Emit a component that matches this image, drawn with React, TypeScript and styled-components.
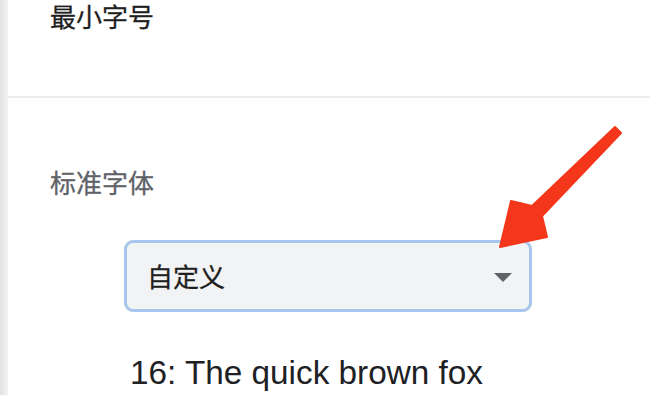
import React from "react";
import styled, { createGlobalStyle } from "styled-components";

const GlobalStyle = createGlobalStyle`
  html, body {
    margin: 0;
    padding: 0;
    background: #ffffff;
  }
  body {
    font-family: "Noto Sans CJK SC", "Liberation Sans", sans-serif;
    color: #202124;
  }
`;

const Shell = styled.div`
  position: relative;
  display: flex;
  width: 650px;
  height: 395px;
  overflow: hidden;
`;

const Edge = styled.div`
  width: 8px;
  flex-shrink: 0;
  background: linear-gradient(to right, #e2e2e2, #f3f3f3);
`;

const Main = styled.div`
  flex: 1;
  display: flex;
  flex-direction: column;
`;

const Section = styled.section<{ $top: number; $divider?: boolean }>`
  padding: ${(p) => p.$top}px 0 0 42px;
  border-bottom: ${(p) => (p.$divider ? "2px solid #ececec" : "none")};
  height: ${(p) => (p.$divider ? "98px" : "auto")};
  box-sizing: border-box;
`;

const Label = styled.div<{ $muted?: boolean }>`
  font-size: 26px;
  line-height: 32px;
  color: ${(p) => (p.$muted ? "#5f6368" : "#1f1f1f")};
  -webkit-text-stroke: 0.3px currentColor;
`;

const Select = styled.div`
  margin: 42px 0 0 74px;
  width: 408px;
  height: 72px;
  box-sizing: border-box;
  border: 3px solid #a9c6ec;
  border-radius: 9px;
  background: #f1f3f4;
  display: flex;
  align-items: center;
  justify-content: space-between;
  padding: 0 17px 0 20px;
`;

const SelectText = styled.span`
  font-size: 26px;
  line-height: 30px;
  color: #1f1f1f;
  -webkit-text-stroke: 0.3px currentColor;
`;

const Caret = styled.span`
  width: 0;
  height: 0;
  border-left: 9px solid transparent;
  border-right: 9px solid transparent;
  border-top: 9px solid #5f6368;
  margin-top: 2px;
`;

const Sample = styled.div`
  margin: 42px 0 0 80px;
  font-family: "Liberation Sans", "Noto Sans CJK SC", sans-serif;
  font-size: 33.3px;
  line-height: 38px;
  color: #202124;
  white-space: nowrap;
`;

const Overlay = styled.svg`
  position: absolute;
  left: 0;
  top: 0;
  pointer-events: none;
`;

const Arrow = () => (
  <Overlay width="650" height="395" viewBox="0 0 650 395">
    <polygon
      points="615,127 532,206 511,201 500,247 547,237 542,216 621,133"
      fill="#f4361a"
      stroke="#f4361a"
      strokeWidth="2"
      strokeLinejoin="round"
    />
  </Overlay>
);

export default function App() {
  return (
    <>
      <GlobalStyle />
      <Shell>
        <Edge />
        <Main>
          <Section $top={0} $divider>
            <Label>最小字号</Label>
          </Section>
          <Section $top={68}>
            <Label $muted>标准字体</Label>
            <Select>
              <SelectText>自定义</SelectText>
              <Caret />
            </Select>
            <Sample>16: The quick brown fox</Sample>
          </Section>
        </Main>
        <Arrow />
      </Shell>
    </>
  );
}
